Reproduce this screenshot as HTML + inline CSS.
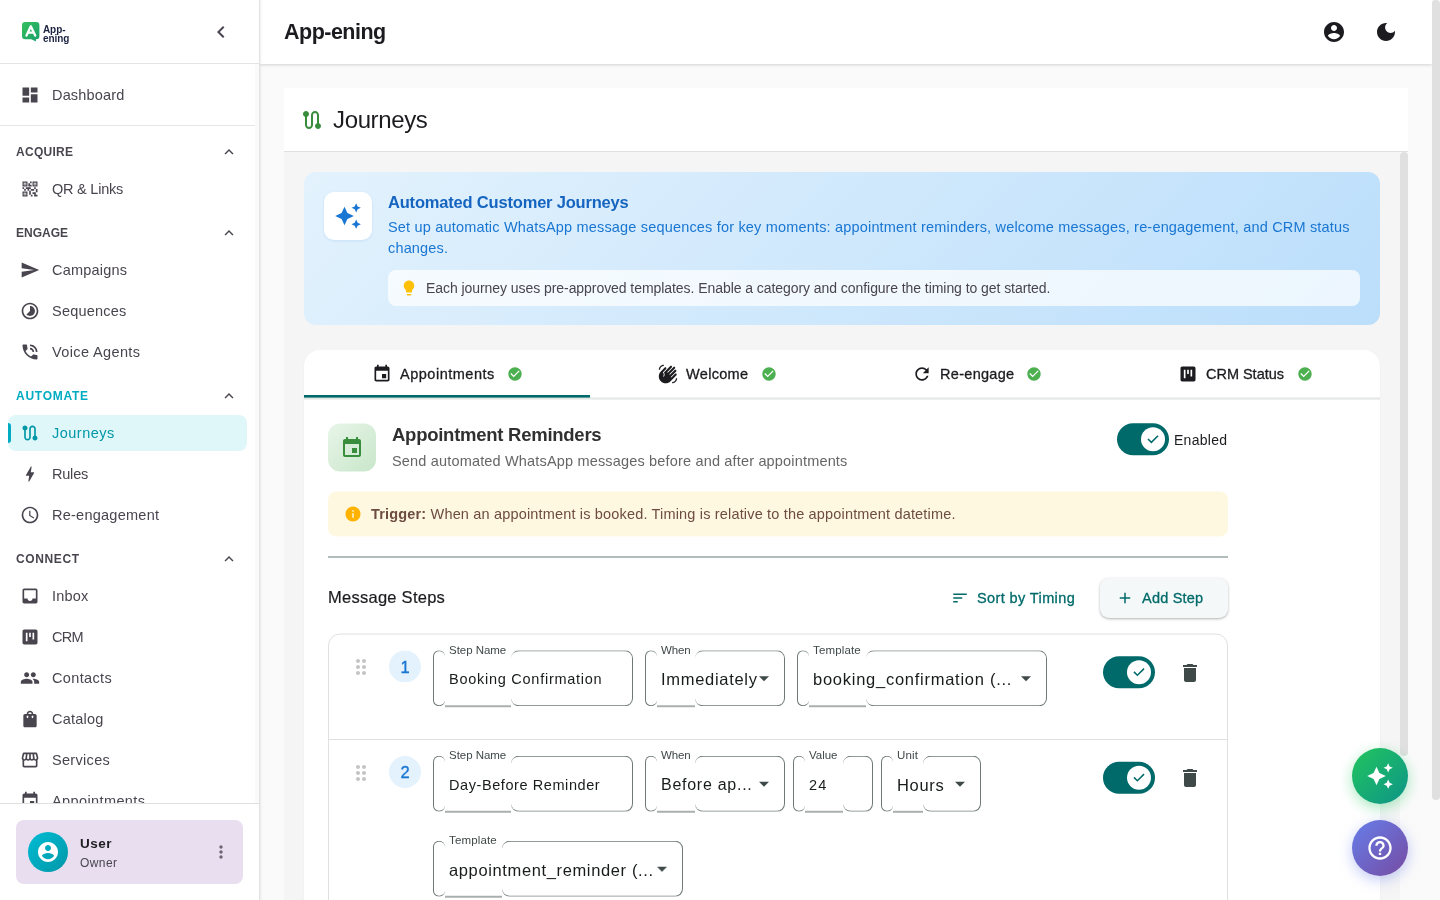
<!DOCTYPE html>
<html lang="en">
<head>
<meta charset="utf-8">
<title>App-ening – Journeys</title>
<style>
*{box-sizing:border-box;margin:0;padding:0}
html,body{width:1440px;height:900px;overflow:hidden;background:#fafafa;font-family:"Liberation Sans",sans-serif;color:#1c1b1f}
body{position:relative}
svg{display:block}
.abs{position:absolute}
/* ---------- sidebar ---------- */
#side{position:absolute;left:0;top:0;width:260px;height:900px;background:#fff;border-right:1px solid #e2e2e2;box-shadow:1px 0 2px rgba(0,0,0,.07)}
#side .top{position:absolute;left:0;top:0;width:259px;height:64px;border-bottom:1px solid #e4e4e4}
.nav{position:absolute;left:8px;width:239px;height:36px;border-radius:8px;color:#49454f;font-size:14.500px}
.nav svg{position:absolute;left:12px;top:8px;width:20px;height:20px;fill:#49454f}
.nav span{position:absolute;left:44px;top:0;line-height:36px;white-space:nowrap;letter-spacing:.35px}
.nav.on{background:#e0f7fa;color:#0097a7;top:414.500px!important}
.nav.on svg{fill:#0097a7}
.nav.on:before{content:"";position:absolute;left:0;top:8px;width:3px;height:20px;background:#00acc1;border-radius:0 3px 3px 0}
.sec{position:absolute;left:16px;width:231px;height:20px;font-size:12px;font-weight:700;letter-spacing:.75px;color:#49454f;line-height:20px}
.sec svg{position:absolute;right:9px;top:1px;width:18px;height:18px;fill:#49454f}
.sec.on{color:#00acc1}
#side .hr{position:absolute;left:0;width:255px;height:1px;background:#e6e6e6}
#side .bottom{position:absolute;left:0;top:803px;width:259px;height:97px;background:#fff;border-top:1px solid #e0e0e0}
#user{position:absolute;left:16px;top:16px;width:227px;height:64px;border-radius:8px;background:#e8def0}
/* ---------- header ---------- */
#hdr{position:absolute;left:260px;top:0;width:1172px;height:64px;background:#fff;box-shadow:0 1px 3px rgba(0,0,0,.16)}
#hdr h1{position:absolute;left:24px;top:0;line-height:64px;font-size:22px;font-weight:700;color:#1c1b1f;letter-spacing:.2px}

/* ---------- main ---------- */
#main{position:absolute;left:260px;top:0;width:1180px;height:900px;background:#fafafa;overflow:hidden}
#pg{position:absolute;left:24px;top:88px;width:1124px;height:812px;background:#fafafa}
#pgh{position:absolute;left:0;top:0;width:1124px;height:64px;background:#fff;border-bottom:1px solid #e0e0e0}
#pgh h2{position:absolute;left:49px;top:0;line-height:64px;font-size:24px;font-weight:400;color:#1c1b1f;letter-spacing:.3px}
#pgb{position:absolute;left:0;top:64px;width:1116px;height:748px;background:#f5f5f5}
.thumb{position:absolute;width:8px;background:#e0e0e0;border-radius:4px}
#ban{position:absolute;left:20px;top:20px;width:1076px;height:153px;border-radius:12px;background:linear-gradient(135deg,#e3f2fd 0%,#bbdefb 100%)}
#card{position:absolute;left:20px;top:198px;width:1076px;height:560px;background:#fff;border-radius:16px 16px 0 0;box-shadow:0 1px 2px rgba(0,0,0,.06)}
.tab{position:absolute;top:0;height:48px;font-size:14.500px;color:#1c1b1f;letter-spacing:.3px}
.tab .ic{position:absolute;top:13.500px;width:20px;height:20px;fill:#1c1b1f}
.tab .tx{position:absolute;top:0;line-height:48px;white-space:nowrap;-webkit-text-stroke:.3px #1c1b1f}
.tab .ok{position:absolute;top:16px;width:16px;height:16px;fill:#4caf50}
.fld{position:absolute;height:56px}
.fld i{position:absolute;top:0;height:56px;border:1px solid #6f7979;border-radius:8px;display:block}
.fld i.a{left:0;width:12px;border-right:none}
.fld i.n{border:none;border-bottom:2px solid rgba(111,121,121,.6);border-radius:0;left:12px;height:56.700px}
.fld i.z{right:0;border-left:none}
.fld label{position:absolute;left:16px;top:-8px;font-size:11.500px;line-height:16px;color:#3f4948;letter-spacing:0;white-space:nowrap}
.fld .v{position:absolute;left:16px;top:1.200px;line-height:56px;white-space:nowrap;color:#191c1c}
.r2 label,.r2 .v{margin-top:-.7px}
.fld .dd{position:absolute;top:16px;width:24px;height:24px;fill:#3f4948}
.sw{position:absolute;width:52px;height:32px;border-radius:16px;background:#006a6a}
.sw b{position:absolute;left:24px;top:4px;width:24px;height:24px;border-radius:50%;background:#fff}
.sw svg{position:absolute;left:28px;top:8px;width:16px;height:16px;fill:#006a6a}
.num{position:absolute;width:32px;height:32px;border-radius:50%;background:#e3f2fd;color:#1976d2;font-weight:400;font-size:16.500px;line-height:32px;text-align:center;-webkit-text-stroke:.35px #1976d2}
/* force greyscale text AA (matches reference) */
.nav span,.sec,.tab .tx,.fld label,.fld .v,.num,#h1,#h2,#bt,#bd1,#bd2,#tip,#st,#ss,#en,#tr,#ms,#sb,#as,#un,#uo,#lt{will-change:transform}
.fab{position:absolute;width:56px;height:56px;border-radius:50%}
</style>
<style id="cal">
/*CAL*/
#h1{letter-spacing:-0.51px!important;font-size:21.5px!important}
#h2{letter-spacing:-0.36px!important}
#n1{letter-spacing:0.16px!important;font-size:14.5px!important}
#n2{letter-spacing:-0.23px!important;font-size:14.5px!important}
#n3{letter-spacing:0.21px!important;font-size:14.5px!important}
#n4{letter-spacing:0.21px!important;font-size:14.5px!important}
#n5{letter-spacing:0.38px!important;font-size:14.5px!important}
#n6{letter-spacing:0.49px!important;font-size:14.5px!important}
#n7{letter-spacing:-0.21px!important;font-size:14.5px!important}
#n8{letter-spacing:0.25px!important;font-size:14.5px!important}
#n9{letter-spacing:0.19px!important;font-size:14.5px!important}
#n10{letter-spacing:-0.77px!important;font-size:14.5px!important}
#n11{letter-spacing:0.36px!important;font-size:14.5px!important}
#n12{letter-spacing:0.21px!important;font-size:14.5px!important}
#n13{letter-spacing:0.31px!important;font-size:14.5px!important}
#n14{letter-spacing:0.39px!important;font-size:14.5px!important}
#s1{letter-spacing:0.28px!important}
#s2{letter-spacing:-0.00px!important}
#s3{letter-spacing:0.73px!important}
#s4{letter-spacing:0.61px!important}
#bt{letter-spacing:-0.19px!important}
#bd1{letter-spacing:0.18px!important}
#bd2{letter-spacing:0.16px!important}
#tip{letter-spacing:-0.06px!important;font-size:14px!important}
#tb1{letter-spacing:0.51px!important}
#tb2{letter-spacing:0.32px!important}
#tb3{letter-spacing:0.30px!important}
#tb4{letter-spacing:-0.02px!important}
#st{letter-spacing:-0.26px!important}
#ss{letter-spacing:0.17px!important}
#tr{letter-spacing:0.17px!important}
#ms{letter-spacing:0.26px!important;font-size:16.5px!important}
#sb{letter-spacing:0.39px!important}
#as{letter-spacing:0.21px!important}
#fl1{letter-spacing:-0.04px!important}
#fl2{letter-spacing:-0.10px!important}
#fl3{letter-spacing:0.15px!important}
#fl4{letter-spacing:-0.04px!important}
#fl5{letter-spacing:-0.10px!important}
#fl6{letter-spacing:-0.02px!important}
#fl7{letter-spacing:0.18px!important}
#fl8{letter-spacing:0.15px!important}
#fv1{letter-spacing:0.74px!important}
#fv2{letter-spacing:0.70px!important}
#fv3{letter-spacing:0.74px!important}
#fv4{letter-spacing:0.58px!important}
#fv5{letter-spacing:0.73px!important;font-size:16px!important}
#fv6{letter-spacing:1.11px!important}
#fv7{letter-spacing:0.68px!important}
#fv8{letter-spacing:0.63px!important}
#un{letter-spacing:0.46px!important}
#uo{letter-spacing:0.41px!important}
#en{letter-spacing:0.27px!important}
/*ENDCAL*/
</style>
</head>
<body>

<!-- ================= MAIN (placeholder) ================= -->
<div id="main">
 <div id="pg">
  <div id="pgb">
   <!-- banner -->
   <div id="ban">
     <div class="abs" style="left:20px;top:20px;width:48px;height:48px;border-radius:10px;background:#fff;box-shadow:0 1px 3px rgba(25,118,210,.12)"></div>
     <svg class="abs" style="left:30px;top:30px;width:28px;height:28px;fill:#1976d2" viewBox="0 0 24 24"><path d="M19 9l1.250-2.750L23 5l-2.750-1.250L19 1l-1.250 2.750L15 5l2.750 1.250L19 9zm-7.500.5L9 4 6.500 9.500 1 12l5.500 2.500L9 20l2.500-5.500L17 12l-5.500-2.500zM19 15l-1.250 2.750L15 19l2.750 1.250L19 23l1.250-2.750L23 19l-2.750-1.250L19 15z"/></svg>
     <div class="abs" id="bt" style="left:84px;top:18px;font-size:16.500px;font-weight:700;line-height:24px;color:#1565c0;white-space:nowrap">Automated Customer Journeys</div>
     <div class="abs" id="bd1" style="left:84px;top:45.300px;font-size:14.500px;line-height:21px;color:#1976d2;white-space:nowrap;letter-spacing:.3px">Set up automatic WhatsApp message sequences for key moments: appointment reminders, welcome messages, re-engagement, and CRM status</div>
     <div class="abs" id="bd2" style="left:84px;top:66.300px;font-size:14.500px;line-height:21px;color:#1976d2;white-space:nowrap;letter-spacing:.3px">changes.</div>
     <div class="abs" style="left:84px;top:98px;width:972px;height:36px;border-radius:8px;background:rgba(255,255,255,.72)"></div>
     <svg class="abs" style="left:96px;top:107px;width:18px;height:18px;fill:#ffc107" viewBox="0 0 24 24"><path d="M9 21c0 .55.45 1 1 1h4c.55 0 1-.45 1-1v-1H9v1zm3-19C8.140 2 5 5.140 5 9c0 2.380 1.190 4.470 3 5.740V17c0 .55.45 1 1 1h6c.55 0 1-.45 1-1v-2.260c1.810-1.270 3-3.360 3-5.740 0-3.860-3.140-7-7-7z"/></svg>
     <div class="abs" id="tip" style="left:122px;top:99px;font-size:14px;line-height:35px;color:#49454f;white-space:nowrap;letter-spacing:.2px">Each journey uses pre-approved templates. Enable a category and configure the timing to get started.</div>
   </div>
   <!-- card -->
   <div id="card">
     <div class="abs" style="left:0;top:47px;width:1076px;height:3px;background:linear-gradient(#f1f3f3 0,#f1f3f3 33%,#e3e8e7 33%,#e3e8e7 67%,#eef1f0 67%)"></div>
     <div class="abs" style="left:0;top:45px;width:286px;height:3px;background:linear-gradient(#006a6a 0,#006a6a 67%,rgba(0,106,106,.62) 67%)"></div>
     <div class="tab" style="left:0;width:286px">
       <svg class="ic" style="left:67.800px" viewBox="0 0 24 24"><path d="M17 12h-5v5h5v-5zM16 1v2H8V1H6v2H5c-1.110 0-1.990.9-1.990 2L3 19c0 1.100.89 2 2 2h14c1.100 0 2-.9 2-2V5c0-1.100-.9-2-2-2h-1V1h-2zm3 18H5V8h14v11z"/></svg>
       <span class="tx" id="tb1" style="left:95.700px">Appointments</span>
       <svg class="ok" style="left:202.600px" viewBox="0 0 24 24"><path d="M12 2C6.480 2 2 6.480 2 12s4.480 10 10 10 10-4.480 10-10S17.520 2 12 2zm-2 15l-5-5 1.410-1.410L10 14.170l7.590-7.590L19 8l-9 9z"/></svg>
     </div>
     <div class="tab" style="left:286px;width:253px">
       <svg class="ic" style="left:67.600px;top:14px" viewBox="0 0 24 24"><path d="M23 17c0 3.310-2.690 6-6 6v-1.500c2.480 0 4.500-2.020 4.500-4.500H23zM1 7c0-3.310 2.690-6 6-6v1.500C4.520 2.500 2.500 4.520 2.500 7H1zm7.010-2.680l-4.600 4.600c-3.220 3.220-3.220 8.450 0 11.670s8.450 3.220 11.670 0l7.070-7.070c.49-.49.49-1.280 0-1.770s-1.280-.49-1.770 0l-4.420 4.420-.71-.71 6.540-6.540c.49-.49.49-1.280 0-1.770s-1.280-.49-1.770 0l-5.830 5.830-.71-.71 6.890-6.890c.49-.49.49-1.280 0-1.770s-1.280-.49-1.770 0l-6.890 6.890-.71-.7 5.500-5.500c.49-.49.49-1.280 0-1.770s-1.280-.49-1.770 0l-7.620 7.620c1.220 1.570 1.110 3.840-.33 5.280l-.71-.71c1.170-1.170 1.170-3.070 0-4.240l-.35-.35 4.070-4.070c.49-.49.49-1.280 0-1.770-.5-.48-1.290-.48-1.780.010z"/></svg>
       <span class="tx" id="tb2" style="left:96.300px">Welcome</span>
       <svg class="ok" style="left:170.700px" viewBox="0 0 24 24"><path d="M12 2C6.480 2 2 6.480 2 12s4.480 10 10 10 10-4.480 10-10S17.520 2 12 2zm-2 15l-5-5 1.410-1.410L10 14.170l7.590-7.590L19 8l-9 9z"/></svg>
     </div>
     <div class="tab" style="left:539px;width:268px">
       <svg class="ic" style="left:68.800px" viewBox="0 0 24 24"><path d="M17.650 6.350C16.200 4.900 14.210 4 12 4c-4.420 0-7.990 3.580-7.990 8s3.570 8 7.990 8c3.730 0 6.840-2.550 7.730-6h-2.080c-.82 2.330-3.040 4-5.650 4-3.310 0-6-2.690-6-6s2.690-6 6-6c1.660 0 3.140.69 4.220 1.780L13 11h7V4l-2.350 2.350z"/></svg>
       <span class="tx" id="tb3" style="left:96.700px">Re-engage</span>
       <svg class="ok" style="left:183.100px" viewBox="0 0 24 24"><path d="M12 2C6.480 2 2 6.480 2 12s4.480 10 10 10 10-4.480 10-10S17.520 2 12 2zm-2 15l-5-5 1.410-1.410L10 14.170l7.590-7.590L19 8l-9 9z"/></svg>
     </div>
     <div class="tab" style="left:807px;width:269px">
       <svg class="ic" style="left:66.500px" viewBox="0 0 24 24"><path d="M19 3H5c-1.100 0-2 .9-2 2v14c0 1.100.9 2 2 2h14c1.100 0 2-.9 2-2V5c0-1.100-.9-2-2-2zM9 17H7V7h2v10zm4-5h-2V7h2v5zm4 3h-2V7h2v8z"/></svg>
       <span class="tx" id="tb4" style="left:94.800px">CRM Status</span>
       <svg class="ok" style="left:185.900px" viewBox="0 0 24 24"><path d="M12 2C6.480 2 2 6.480 2 12s4.480 10 10 10 10-4.480 10-10S17.520 2 12 2zm-2 15l-5-5 1.410-1.410L10 14.170l7.590-7.590L19 8l-9 9z"/></svg>
     </div>
     
     <!-- section header -->
     <div class="abs" style="left:24px;top:74px;width:48px;height:48px;border-radius:12px;background:linear-gradient(135deg,#e8f5e9,#c8e6c9);transform:translateY(-.4px)"></div>
     <svg class="abs" style="left:36px;top:86px;width:24px;height:24px;fill:#388e3c" viewBox="0 0 24 24"><path d="M17 12h-5v5h5v-5zM16 1v2H8V1H6v2H5c-1.110 0-1.990.9-1.990 2L3 19c0 1.100.89 2 2 2h14c1.100 0 2-.9 2-2V5c0-1.100-.9-2-2-2h-1V1h-2zm3 18H5V8h14v11z"/></svg>
     <div class="abs" id="st" style="left:88px;top:73px;font-size:18.500px;font-weight:700;line-height:24px;color:#303030;white-space:nowrap">Appointment Reminders</div>
     <div class="abs" id="ss" style="left:88px;top:101px;font-size:14.500px;line-height:20px;color:#666;white-space:nowrap;letter-spacing:.3px">Send automated WhatsApp messages before and after appointments</div>
<div class="sw" style="left:813px;top:73px;transform:translateY(.3px)"><b></b><svg viewBox="0 0 24 24"><path d="M9.550 18.200 3.650 12.300 5.275 10.675 9.550 14.950 18.725 5.775 20.350 7.400Z"/></svg></div>
     <div class="abs" id="en" style="left:869.900px;top:79.500px;font-size:14px;line-height:20px;color:#1c1b1f;white-space:nowrap;letter-spacing:.3px">Enabled</div>
     <!-- trigger -->
     <div class="abs" style="left:24px;top:141px;width:900px;height:45px;border-radius:8px;background:#fff8e1;transform:translateY(.4px)"></div>
     <svg class="abs" style="left:40px;top:155px;width:18px;height:18px;fill:#ffb300" viewBox="0 0 24 24"><path d="M12 2C6.480 2 2 6.480 2 12s4.480 10 10 10 10-4.480 10-10S17.520 2 12 2zm1 15h-2v-6h2v6zm0-8h-2V7h2v2z"/></svg>
     <div class="abs" id="tr" style="left:66.750px;top:142.200px;font-size:14.500px;line-height:44px;color:#6d4c41;white-space:nowrap;letter-spacing:.3px"><b>Trigger:</b> When an appointment is booked. Timing is relative to the appointment datetime.</div>
     <div class="abs" style="left:24px;top:206px;width:900px;height:2px;background:#b3bcbc"></div>
     <!-- steps header -->
     <div class="abs" id="ms" style="-webkit-text-stroke:.2px #1c1b1f;left:24px;top:235px;font-size:16.500px;line-height:24px;color:#1c1b1f;white-space:nowrap;letter-spacing:.2px">Message Steps</div>
     <svg class="abs" style="left:647px;top:239px;width:18px;height:18px;fill:#006a6a" viewBox="0 0 24 24"><path d="M3 18h6v-2H3v2zM3 6v2h18V6H3zm0 7h12v-2H3v2z"/></svg>
     <div class="abs" id="sb" style="-webkit-text-stroke:.3px #006a6a;left:673.300px;top:238.300px;font-size:14.500px;line-height:20px;color:#006a6a;white-space:nowrap;letter-spacing:.3px">Sort by Timing</div>
     <div class="abs" style="left:796px;top:228px;width:128px;height:40px;border-radius:9px;background:#f4f8f8;box-shadow:0 1px 2px rgba(0,0,0,.2),0 1px 3px 1px rgba(0,0,0,.08)"></div>
     <svg class="abs" style="left:811.700px;top:239.400px;width:18px;height:18px;fill:#006a6a" viewBox="0 0 24 24"><path d="M19 13h-6v6h-2v-6H5v-2h6V5h2v6h6v2z"/></svg>
     <div class="abs" id="as" style="-webkit-text-stroke:.3px #006a6a;left:838.200px;top:238.300px;font-size:14.500px;line-height:20px;color:#006a6a;white-space:nowrap;letter-spacing:.3px">Add Step</div>
     <!-- steps list -->
     <div class="abs" style="left:24px;top:283px;width:900px;height:300px;border:1px solid #e0e0e0;border-radius:12px 12px 0 0;background:#fff;transform:translateY(.5px)"></div>
     <div class="abs" style="left:25px;top:389px;width:898px;height:1px;background:#e0e0e0"></div>
<svg class="abs" style="left:45.250px;top:305.250px;width:24px;height:24px;fill:#c4c4c4" viewBox="0 0 24 24"><path d="M11 18c0 1.100-.9 2-2 2s-2-.9-2-2 .9-2 2-2 2 .9 2 2zm-2-8c-1.100 0-2 .9-2 2s.9 2 2 2 2-.9 2-2-.9-2-2-2zm0-6c-1.100 0-2 .9-2 2s.9 2 2 2 2-.9 2-2-.9-2-2-2zm6 4c1.100 0 2-.9 2-2s-.9-2-2-2-2 .9-2 2 .9 2 2 2zm0 2c-1.100 0-2 .9-2 2s.9 2 2 2 2-.9 2-2-.9-2-2-2zm0 6c-1.100 0-2 .9-2 2s.9 2 2 2 2-.9 2-2-.9-2-2-2z"/></svg>
     <div class="num" style="left:85px;top:300px;transform:translateY(.5px)">1</div>
<div class="fld" style="left:129px;top:300px;transform:translateY(.3px);width:200px"><i class="a"></i><i class="n" style="width:66px"></i><i class="z" style="left:78px"></i><label id="fl1">Step Name</label><span class="v" id="fv1" style="font-size:14.5px;letter-spacing:0.5px">Booking Confirmation</span></div>
<div class="fld" style="left:341px;top:300px;transform:translateY(.3px);width:140px"><i class="a"></i><i class="n" style="width:38px"></i><i class="z" style="left:50px"></i><label id="fl2">When</label><span class="v" id="fv2" style="font-size:16.5px;letter-spacing:0.5px">Immediately</span><svg class="dd" style="left:107px" viewBox="0 0 24 24"><path d="M7 10l5 5 5-5z"/></svg></div>
<div class="fld" style="left:493px;top:300px;transform:translateY(.3px);width:250px"><i class="a"></i><i class="n" style="width:57px"></i><i class="z" style="left:69px"></i><label id="fl3">Template</label><span class="v" id="fv3" style="font-size:16.5px;letter-spacing:0.5px">booking_confirmation (...</span><svg class="dd" style="left:217px" viewBox="0 0 24 24"><path d="M7 10l5 5 5-5z"/></svg></div>
<div class="sw" style="left:799px;top:306px;transform:translateY(.2px)"><b></b><svg viewBox="0 0 24 24"><path d="M9.550 18.200 3.650 12.300 5.275 10.675 9.550 14.950 18.725 5.775 20.350 7.400Z"/></svg></div>
<svg class="abs" style="left:873.500px;top:310.900px;width:24px;height:24px;fill:#3f4948" viewBox="0 0 24 24"><path d="M6 19c0 1.100.9 2 2 2h8c1.100 0 2-.9 2-2V7H6v12zM19 4h-3.500l-1-1h-5l-1 1H5v2h14V4z"/></svg>
<svg class="abs" style="left:45.250px;top:410.750px;width:24px;height:24px;fill:#c4c4c4" viewBox="0 0 24 24"><path d="M11 18c0 1.100-.9 2-2 2s-2-.9-2-2 .9-2 2-2 2 .9 2 2zm-2-8c-1.100 0-2 .9-2 2s.9 2 2 2 2-.9 2-2-.9-2-2-2zm0-6c-1.100 0-2 .9-2 2s.9 2 2 2 2-.9 2-2-.9-2-2-2zm6 4c1.100 0 2-.9 2-2s-.9-2-2-2-2 .9-2 2 .9 2 2 2zm0 2c-1.100 0-2 .9-2 2s.9 2 2 2 2-.9 2-2-.9-2-2-2zm0 6c-1.100 0-2 .9-2 2s.9 2 2 2 2-.9 2-2-.9-2-2-2z"/></svg>
     <div class="num" style="left:85px;top:406px">2</div>
<div class="fld r2" style="left:129px;top:405px;transform:translateY(.8px);width:200px"><i class="a"></i><i class="n" style="width:66px"></i><i class="z" style="left:78px"></i><label id="fl4">Step Name</label><span class="v" id="fv4" style="font-size:14.5px;letter-spacing:0.5px">Day-Before Reminder</span></div>
<div class="fld r2" style="left:341px;top:405px;transform:translateY(.8px);width:140px"><i class="a"></i><i class="n" style="width:38px"></i><i class="z" style="left:50px"></i><label id="fl5">When</label><span class="v" id="fv5" style="font-size:16.5px;letter-spacing:0.5px">Before ap...</span><svg class="dd" style="left:107px" viewBox="0 0 24 24"><path d="M7 10l5 5 5-5z"/></svg></div>
<div class="fld r2" style="left:489px;top:405px;transform:translateY(.8px);width:80px"><i class="a"></i><i class="n" style="width:37.500px"></i><i class="z" style="left:49.500px"></i><label id="fl6">Value</label><span class="v" id="fv6" style="font-size:14.5px;letter-spacing:0.5px">24</span></div>
<div class="fld r2" style="left:577px;top:405px;transform:translateY(.8px);width:100px"><i class="a"></i><i class="n" style="width:30px"></i><i class="z" style="left:42px"></i><label id="fl7">Unit</label><span class="v" id="fv7" style="font-size:16.5px;letter-spacing:0.5px">Hours</span><svg class="dd" style="left:67px" viewBox="0 0 24 24"><path d="M7 10l5 5 5-5z"/></svg></div>
<div class="fld r2" style="left:129px;top:490px;transform:translateY(.75px);width:250px"><i class="a"></i><i class="n" style="width:57px"></i><i class="z" style="left:69px"></i><label id="fl8">Template</label><span class="v" id="fv8" style="font-size:16.5px;letter-spacing:0.5px">appointment_reminder (...</span><svg class="dd" style="left:217px" viewBox="0 0 24 24"><path d="M7 10l5 5 5-5z"/></svg></div>
<div class="sw" style="left:799px;top:411px;transform:translateY(.7px)"><b></b><svg viewBox="0 0 24 24"><path d="M9.550 18.200 3.650 12.300 5.275 10.675 9.550 14.950 18.725 5.775 20.350 7.400Z"/></svg></div>
<svg class="abs" style="left:873.500px;top:416.400px;width:24px;height:24px;fill:#3f4948" viewBox="0 0 24 24"><path d="M6 19c0 1.100.9 2 2 2h8c1.100 0 2-.9 2-2V7H6v12zM19 4h-3.500l-1-1h-5l-1 1H5v2h14V4z"/></svg>

   </div>
  </div>
  <div id="pgh">
    <svg class="abs" style="left:16px;top:20px;width:24px;height:24px;fill:#388e3c" viewBox="0 0 24 24"><path d="M19 15.180V7c0-2.210-1.790-4-4-4s-4 1.790-4 4v10c0 1.100-.9 2-2 2s-2-.9-2-2V8.820C8.160 8.400 9 7.300 9 6c0-1.660-1.340-3-3-3S3 4.340 3 6c0 1.300.84 2.400 2 2.820V17c0 2.210 1.790 4 4 4s4-1.790 4-4V7c0-1.100.9-2 2-2s2 .9 2 2v8.180c-1.160.41-2 1.510-2 2.820 0 1.660 1.340 3 3 3s3-1.340 3-3c0-1.300-.84-2.400-2-2.820z"/></svg>
    <h2 id="h2">Journeys</h2>
  </div>
  <div class="thumb" style="left:1116px;top:64px;height:604px"></div>
 </div>
 <!-- FABs -->
 <div class="fab" style="left:1092px;top:748px;background:linear-gradient(135deg,#22c55e,#0d9488);box-shadow:0 4px 14px rgba(34,197,94,.4)"></div>
 <svg class="abs" style="left:1106px;top:762px;width:28px;height:28px;fill:#fff" viewBox="0 0 24 24"><path d="M19 9l1.250-2.750L23 5l-2.750-1.250L19 1l-1.250 2.750L15 5l2.750 1.250L19 9zm-7.500.5L9 4 6.500 9.500 1 12l5.500 2.500L9 20l2.500-5.500L17 12l-5.500-2.500zM19 15l-1.250 2.750L15 19l2.750 1.250L19 23l1.250-2.750L23 19l-2.750-1.250L19 15z"/></svg>
 <div class="fab" style="left:1092px;top:820px;background:linear-gradient(135deg,#667eea,#764ba2);box-shadow:0 4px 14px rgba(102,126,234,.4)"></div>
 <svg class="abs" style="left:1106px;top:834px;width:28px;height:28px;fill:#fff" viewBox="0 0 24 24"><path d="M11 18h2v-2h-2v2zm1-16C6.480 2 2 6.480 2 12s4.480 10 10 10 10-4.480 10-10S17.520 2 12 2zm0 18c-4.410 0-8-3.590-8-8s3.590-8 8-8 8 3.590 8 8-3.590 8-8 8zm0-14c-2.210 0-4 1.790-4 4h2c0-1.100.9-2 2-2s2 .9 2 2c0 2-3 1.750-3 5h2c0-2.250 3-2.500 3-5 0-2.210-1.790-4-4-4z"/></svg>
</div>

<!-- ================= HEADER ================= -->
<div id="hdr">
  <h1 id="h1">App-ening</h1>
  <svg class="abs" style="left:1062px;top:20px;width:24px;height:24px;fill:#1c1b1f" viewBox="0 0 24 24"><path d="M12 2C6.48 2 2 6.48 2 12s4.48 10 10 10 10-4.480 10-10S17.520 2 12 2zm0 3c1.660 0 3 1.340 3 3s-1.340 3-3 3-3-1.340-3-3 1.340-3 3-3zm0 14.200c-2.500 0-4.710-1.280-6-3.220.030-1.990 4-3.080 6-3.080 1.990 0 5.970 1.090 6 3.080-1.290 1.940-3.500 3.220-6 3.220z"/></svg>
  <svg class="abs" style="left:1114px;top:20px;width:24px;height:24px;fill:#1c1b1f" viewBox="0 0 24 24"><path d="M12 3c-4.970 0-9 4.030-9 9s4.030 9 9 9 9-4.030 9-9c0-.46-.04-.92-.1-1.360-.98 1.370-2.580 2.260-4.400 2.260-2.980 0-5.400-2.420-5.400-5.400 0-1.810.89-3.420 2.260-4.400-.44-.06-.9-.1-1.360-.1z"/></svg>
</div>

<!-- ================= SIDEBAR ================= -->
<div id="side">
  <div class="top">
    <!-- logo -->
    <svg class="abs" style="left:21px;top:20.800px;width:20px;height:22px" viewBox="0 0 20 22">
      <defs><linearGradient id="lg" x1="0" y1="0" x2="1" y2="1"><stop offset="0" stop-color="#34c15c"/><stop offset="1" stop-color="#1a9f6c"/></linearGradient></defs>
      <path d="M4.200 1h11a3.200 3.200 0 0 1 3.200 3.200v10.900a3.200 3.200 0 0 1-3.200 3.200h-.4l.2 2.300-4.700-2.300H4.200A3.200 3.200 0 0 1 1 15.100V4.200A3.200 3.200 0 0 1 4.200 1z" fill="url(#lg)"/>
      <path d="M5.500 14.600 9.800 5.300 14.200 14.600M7.200 11.700h5.300" fill="none" stroke="#fff" stroke-width="2.300" stroke-linejoin="round" stroke-linecap="round"/>
    </svg>
    <div class="abs" style="left:43px;top:26px;font-size:10px;font-weight:700;line-height:8.500px;color:#1b2340;letter-spacing:-.1px" id="lt">App-<br>ening</div>
    <svg class="abs" style="left:209px;top:20px;width:24px;height:24px;fill:#49454f" viewBox="0 0 24 24"><path d="M15.410 7.410L14 6l-6 6 6 6 1.410-1.410L10.830 12z"/></svg>
  </div>

  <div class="nav" style="top:77px"><svg viewBox="0 0 24 24"><path d="M3 13h8V3H3v10zm0 8h8v-6H3v6zm10 0h8V11h-8v10zm0-18v6h8V3h-8z"/></svg><span id="n1">Dashboard</span></div>
  <div class="hr" style="top:125px"></div>

  <div class="sec" id="s1" style="top:142px">ACQUIRE<svg viewBox="0 0 24 24"><path d="M12 8l-6 6 1.410 1.410L12 10.830l4.590 4.580L18 14z"/></svg></div>
  <div class="nav" style="top:171px"><svg viewBox="0 0 24 24"><path d="M15 21h-2v-2h2v2zm-2-7h-2v5h2v-5zm8-2h-2v4h2v-4zm-2-2h-2v2h2v-2zM7 12H5v2h2v-2zm-2-2H3v2h2v-2zm7-5h2V3h-2v2zm-7.500-.5v3h3v-3h-3zM9 9H3V3h6v6zm-4.500 7.500v3h3v-3h-3zM9 21H3v-6h6v6zm7.500-16.500v3h3v-3h-3zM21 9h-6V3h6v6zm-2 10v-3h-4v2h2v3h4v-2h-2zm-2-7h-4v2h4v-2zm-4-2H7v2h2v2h2v-2h2v-2zm1-1V7h-2V5h-2v4h4zM6.750 5.250h-1.500v1.500h1.500v-1.500zm0 12h-1.500v1.500h1.500v-1.500zm12-12h-1.500v1.500h1.500v-1.500z"/></svg><span id="n2">QR &amp; Links</span></div>

  <div class="sec" id="s2" style="top:223px">ENGAGE<svg viewBox="0 0 24 24"><path d="M12 8l-6 6 1.410 1.410L12 10.830l4.590 4.580L18 14z"/></svg></div>
  <div class="nav" style="top:252px"><svg viewBox="0 0 24 24"><path d="M2.010 21L23 12 2.010 3 2 10l15 2-15 2z"/></svg><span id="n3">Campaigns</span></div>
  <div class="nav" style="top:293px"><svg viewBox="0 0 24 24"><path d="M16.240 7.760C15.070 6.590 13.540 6 12 6v6l-4.240 4.240c2.340 2.340 6.140 2.340 8.490 0 2.340-2.340 2.340-6.140-.01-8.480zM12 2C6.480 2 2 6.480 2 12s4.480 10 10 10 10-4.480 10-10S17.520 2 12 2zm0 18c-4.420 0-8-3.580-8-8s3.580-8 8-8 8 3.580 8 8-3.580 8-8 8z"/></svg><span id="n4">Sequences</span></div>
  <div class="nav" style="top:334px"><svg viewBox="0 0 24 24"><path d="M20 15.500c-1.250 0-2.450-.2-3.570-.57-.35-.11-.74-.03-1.020.24l-2.200 2.200c-2.830-1.440-5.150-3.750-6.590-6.590l2.200-2.210c.28-.26.36-.65.250-1C8.700 6.450 8.500 5.250 8.500 4c0-.55-.45-1-1-1H4c-.55 0-1 .45-1 1 0 9.390 7.610 17 17 17 .55 0 1-.45 1-1v-3.500c0-.55-.45-1-1-1zM19 12h2c0-4.970-4.030-9-9-9v2c3.870 0 7 3.130 7 7zm-4 0h2c0-2.760-2.240-5-5-5v2c1.660 0 3 1.340 3 3z"/></svg><span id="n5">Voice Agents</span></div>

  <div class="sec on" id="s3" style="top:386px">AUTOMATE<svg viewBox="0 0 24 24"><path d="M12 8l-6 6 1.410 1.410L12 10.830l4.590 4.580L18 14z"/></svg></div>
  <div class="nav on" style="top:415px"><svg viewBox="0 0 24 24"><path d="M19 15.180V7c0-2.210-1.790-4-4-4s-4 1.790-4 4v10c0 1.100-.9 2-2 2s-2-.9-2-2V8.820C8.160 8.400 9 7.300 9 6c0-1.660-1.340-3-3-3S3 4.340 3 6c0 1.300.84 2.400 2 2.820V17c0 2.210 1.790 4 4 4s4-1.790 4-4V7c0-1.100.9-2 2-2s2 .9 2 2v8.180c-1.160.41-2 1.510-2 2.820 0 1.660 1.340 3 3 3s3-1.340 3-3c0-1.300-.84-2.400-2-2.820z"/></svg><span id="n6">Journeys</span></div>
  <div class="nav" style="top:456px"><svg viewBox="0 0 24 24"><path d="M11 21h-1l1-7H7.500c-.58 0-.57-.32-.38-.66.19-.34.05-.08.07-.12C8.480 10.940 10.420 7.540 13 3h1l-1 7h3.500c.49 0 .56.33.47.51l-.07.15C12.960 17.550 11 21 11 21z"/></svg><span id="n7">Rules</span></div>
  <div class="nav" style="top:497px"><svg viewBox="0 0 24 24"><path d="M11.990 2C6.470 2 2 6.480 2 12s4.470 10 9.990 10C17.520 22 22 17.520 22 12S17.520 2 11.990 2zM12 20c-4.420 0-8-3.580-8-8s3.580-8 8-8 8 3.580 8 8-3.580 8-8 8zm.5-13H11v6l5.250 3.150.75-1.230-4.500-2.670z"/></svg><span id="n8">Re-engagement</span></div>

  <div class="sec" id="s4" style="top:549px">CONNECT<svg viewBox="0 0 24 24"><path d="M12 8l-6 6 1.410 1.410L12 10.830l4.590 4.580L18 14z"/></svg></div>
  <div class="nav" style="top:578px"><svg viewBox="0 0 24 24"><path d="M19 3H4.990c-1.110 0-1.980.89-1.980 2L3 19c0 1.100.88 2 1.990 2H19c1.100 0 2-.9 2-2V5c0-1.110-.9-2-2-2zm0 12h-4c0 1.660-1.350 3-3 3s-3-1.340-3-3H4.990V5H19v10z"/></svg><span id="n9">Inbox</span></div>
  <div class="nav" style="top:619px"><svg viewBox="0 0 24 24"><path d="M19 3H5c-1.100 0-2 .9-2 2v14c0 1.100.9 2 2 2h14c1.100 0 2-.9 2-2V5c0-1.100-.9-2-2-2zM9 17H7V7h2v10zm4-5h-2V7h2v5zm4 3h-2V7h2v8z"/></svg><span id="n10">CRM</span></div>
  <div class="nav" style="top:660px"><svg viewBox="0 0 24 24"><path d="M16 11c1.660 0 2.990-1.340 2.990-3S17.660 5 16 5c-1.660 0-3 1.340-3 3s1.340 3 3 3zm-8 0c1.660 0 2.990-1.340 2.990-3S9.660 5 8 5C6.340 5 5 6.340 5 8s1.340 3 3 3zm0 2c-2.330 0-7 1.170-7 3.500V19h14v-2.500c0-2.330-4.670-3.500-7-3.500zm8 0c-.29 0-.62.020-.97.050 1.160.84 1.970 1.970 1.970 3.450V19h6v-2.500c0-2.330-4.670-3.500-7-3.500z"/></svg><span id="n11">Contacts</span></div>
  <div class="nav" style="top:701px"><svg viewBox="0 0 24 24"><path d="M18 6h-2c0-2.210-1.790-4-4-4S8 3.790 8 6H6c-1.100 0-2 .9-2 2v12c0 1.100.9 2 2 2h12c1.100 0 2-.9 2-2V8c0-1.100-.9-2-2-2zm-8 4c0 .55-.45 1-1 1s-1-.45-1-1V8h2v2zm2-6c1.100 0 2 .9 2 2h-4c0-1.100.9-2 2-2zm4 6c0 .55-.45 1-1 1s-1-.45-1-1V8h2v2z"/></svg><span id="n12">Catalog</span></div>
  <div class="nav" style="top:742px"><svg viewBox="0 0 24 24"><path d="M21.900 8.890l-1.050-4.370c-.22-.9-1-1.520-1.910-1.520H5.050c-.9 0-1.690.63-1.900 1.520L2.100 8.890c-.24 1.020-.02 2.060.62 2.880.08.11.19.19.28.29V19c0 1.100.9 2 2 2h14c1.100 0 2-.9 2-2v-6.940c.09-.09.2-.18.280-.28.64-.82.87-1.870.62-2.890zm-2.990-3.900l1.050 4.370c.1.420.01.840-.25 1.170-.14.180-.44.470-.94.470-.61 0-1.140-.49-1.210-1.140L16.980 5l1.930-.01zM13 5h1.960l.54 4.520c.05.390-.07.780-.33 1.070-.22.260-.54.410-.95.410-.67 0-1.220-.59-1.220-1.310V5zM8.490 9.520L9.040 5H11v4.690c0 .72-.55 1.310-1.290 1.310-.34 0-.65-.15-.89-.41-.25-.29-.37-.68-.33-1.070zm-4.450-.16L5.050 5h1.970l-.58 4.860c-.08.650-.6 1.140-1.210 1.140-.49 0-.8-.29-.93-.47-.27-.32-.36-.75-.26-1.170zM5 19v-6.030c.08.010.15.030.23.030.87 0 1.660-.36 2.240-.95.600.6 1.400.95 2.310.95.870 0 1.650-.36 2.230-.93.590.57 1.390.93 2.290.93.840 0 1.640-.35 2.240-.95.580.59 1.370.95 2.240.95.080 0 .15-.02.23-.03V19H5z"/></svg><span id="n13">Services</span></div>
  <div class="nav" style="top:783px"><svg viewBox="0 0 24 24"><path d="M17 12h-5v5h5v-5zM16 1v2H8V1H6v2H5c-1.110 0-1.990.9-1.990 2L3 19c0 1.100.89 2 2 2h14c1.100 0 2-.9 2-2V5c0-1.100-.9-2-2-2h-1V1h-2zm3 18H5V8h14v11z"/></svg><span id="n14">Appointments</span></div>

  <div class="abs" style="left:255px;top:64px;width:4px;height:739px;background:#fafafa"></div>
  <div class="bottom">
    <div id="user">
      <div class="abs" style="left:12px;top:12px;width:40px;height:40px;border-radius:50%;background:linear-gradient(135deg,#00bcd4,#0097a7)"></div>
      <svg class="abs" style="left:20px;top:20px;width:24px;height:24px;fill:#fff" viewBox="0 0 24 24"><path d="M12 2C6.48 2 2 6.48 2 12s4.480 10 10 10 10-4.480 10-10S17.520 2 12 2zm0 3c1.660 0 3 1.340 3 3s-1.340 3-3 3-3-1.340-3-3 1.340-3 3-3zm0 14.200c-2.500 0-4.710-1.280-6-3.220.030-1.990 4-3.080 6-3.080 1.990 0 5.970 1.090 6 3.080-1.290 1.940-3.500 3.220-6 3.220z"/></svg>
      <div class="abs" style="left:64px;top:14px;font-size:13.500px;font-weight:700;line-height:20px;color:#1c1b1f;letter-spacing:.25px" id="un">User</div>
      <div class="abs" style="left:64px;top:35px;font-size:12px;line-height:16px;color:#49454f;letter-spacing:.2px" id="uo">Owner</div>
      <svg class="abs" style="left:195px;top:22px;width:20px;height:20px;fill:#6b6670" viewBox="0 0 24 24"><path d="M12 8c1.100 0 2-.9 2-2s-.9-2-2-2-2 .9-2 2 .9 2 2 2zm0 2c-1.100 0-2 .9-2 2s.9 2 2 2 2-.9 2-2-.9-2-2-2zm0 6c-1.100 0-2 .9-2 2s.9 2 2 2 2-.9 2-2-.9-2-2-2z"/></svg>
    </div>
  </div>
</div>

<!-- page scrollbar thumb -->
<div class="thumb" style="left:1432px;top:0;height:800px"></div>
</body>
</html>
